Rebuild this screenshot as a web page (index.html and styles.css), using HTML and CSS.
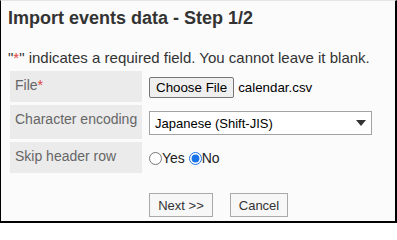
FILE: index.html
```html
<!DOCTYPE html>
<html lang="en">
<head>
<meta charset="utf-8">
<title>Import events data - Step 1/2</title>
<link rel="stylesheet" href="styles.css">
</head>
<body>
<div class="frame">
  <h1 class="title">Import events data - Step 1/2</h1>
  <p class="note">"<span class="req">*</span>" indicates a required field. You cannot leave it blank.</p>
  <div class="form">
    <div class="row row-file">
      <div class="label">File<span class="req">*</span></div>
      <div class="value value-file">
        <span class="file-btn">Choose File</span><span class="file-name">calendar.csv</span>
      </div>
    </div>
    <div class="row row-enc">
      <div class="label">Character encoding</div>
      <div class="value">
        <span class="select-wrap">
          <select class="select">
            <option>Japanese (Shift-JIS)</option>
          </select>
          <svg class="arrow" width="10" height="6" viewBox="0 0 10 6"><path d="M0 0 H10 L5 6 Z" fill="#333"/></svg>
        </span>
      </div>
    </div>
    <div class="row row-skip">
      <div class="label">Skip header row</div>
      <div class="value value-radio">
        <label class="opt"><input type="radio" name="skip" class="radio">Yes</label>
        <label class="opt"><input type="radio" name="skip" class="radio" checked>No</label>
      </div>
    </div>
  </div>
  <div class="actions">
    <button class="btn btn-next">Next &gt;&gt;</button>
    <button class="btn btn-cancel">Cancel</button>
  </div>
</div>
</body>
</html>
```
FILE: styles.css
```css
* { box-sizing: border-box; }
html, body { margin: 0; padding: 0; }
body {
  font-family: "Liberation Sans", Arial, sans-serif;
  background: #fff;
}
.frame {
  width: 397px;
  height: 223px;
  border-left: 1px solid #000;
  border-right: 2px solid #000;
  border-bottom: 2px solid #000;
  border-top: 1px solid #e4e4e4;
  background: #fbfbfb;
  padding: 0 0 0 7px;
  overflow: hidden;
}
.title {
  margin: 6px 0 0;
  font-size: 18px;
  line-height: 22px;
  font-weight: bold;
  color: #333;
}
.note {
  margin: 20px 0 0;
  font-size: 15px;
  line-height: 18px;
  color: #333;
}
.req { color: #e0413a; }
.form {
  margin: 4px 0 0 2px;
  display: flex;
  flex-direction: column;
  gap: 3px;
}
.row {
  display: flex;
}
.row-file { height: 31px; }
.row-enc { height: 34px; }
.row-skip { height: 31px; }
.label {
  width: 132px;
  flex: none;
  background: #ebebeb;
  color: #666;
  font-size: 14px;
  line-height: 19px;
  padding: 5px 0 0 5px;
  white-space: nowrap;
}
.value {
  flex: 1;
  padding: 6px 0 0 7px;
  font-size: 14px;
  line-height: 18px;
  color: #222;
}
.value-radio { padding-top: 7px; }
.value-file {
  display: flex;
  align-items: flex-start;
}
.file-btn {
  display: inline-block;
  height: 21px;
  line-height: 19px;
  padding: 0 6px;
  border: 1px solid #767676;
  border-radius: 2px;
  background: #efefef;
  font-size: 13.33px;
  color: #000;
}
.file-name {
  margin-left: 4px;
  font-size: 13.33px;
  line-height: 21px;
  color: #000;
}
.select-wrap {
  position: relative;
  display: inline-block;
}
.select {
  appearance: none;
  -webkit-appearance: none;
  width: 223px;
  height: 24px;
  margin: 0;
  border: 1px solid #a3a3a3;
  border-radius: 0;
  background: #fff;
  padding: 0 0 0 5px;
  font-family: "Liberation Sans", Arial, sans-serif;
  font-size: 13px;
  color: #000;
  display: block;
}
.arrow {
  position: absolute;
  right: 6px;
  top: 9px;
  pointer-events: none;
}
.opt {
  color: #222;
}
.radio {
  margin: 0;
  width: 13px;
  height: 13px;
  vertical-align: -2px;
  accent-color: #1a73e8;
}
.actions {
  margin: 20px 0 0 141px;
  display: flex;
  gap: 17px;
}
.btn {
  height: 24px;
  padding: 0;
  margin: 0;
  border: 1px solid #a9a9a9;
  border-radius: 0;
  background: #f7f7f7;
  font-family: "Liberation Sans", Arial, sans-serif;
  font-size: 13px;
  color: #333;
  text-align: center;
}
.btn-next { width: 64px; }
.btn-cancel { width: 58px; }
```
